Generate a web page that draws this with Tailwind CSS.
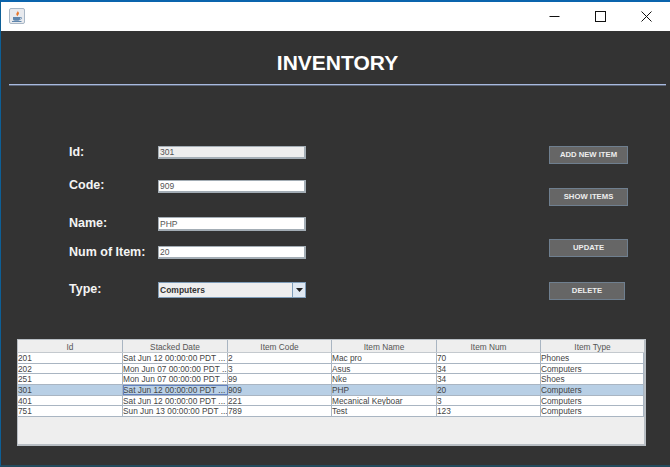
<!DOCTYPE html>
<html>
<head>
<meta charset="utf-8">
<script src="https://cdn.jsdelivr.net/npm/@tailwindcss/browser@4"></script>
</head>
<body class="w-[670px] h-[467px] overflow-hidden bg-[#333333] font-['Liberation_Sans',Arial,sans-serif]">
<div class="flex flex-col w-[670px] h-[467px] border-t-2 border-t-[#0a64ad] border-l border-l-[#0d5f96] border-b-2 border-b-[#234a5c]">
  <!-- title bar -->
  <header class="flex items-center justify-between h-[29px] bg-white shrink-0">
    <div class="ml-[8px] mt-[-1px] w-[16px] h-[16px] rounded-[2px] border border-[#a9b7c6] bg-[#e8eaee] flex items-center justify-center">
      <svg width="12" height="13" viewBox="0 0 12 13">
        <path d="M6.500 0.500c1 1.500-2 2.500-1 4.500c.3.600.8 1 1.200 1.300c-.4-1.200 1.800-2 1.200-3.600c-.3-.8-1-1.300-1.400-2.200z" fill="#e8762b"/>
        <path d="M2 7h7v2c0 1-.8 1.700-1.800 1.700H3.800C2.800 10.700 2 10 2 9z" fill="#5f86ad"/>
        <path d="M9 7.500h1.200c.8 0 .8 1.800-1.200 1.800" fill="none" stroke="#5f86ad" stroke-width=".8"/>
        <path d="M1 11.500h9.500" stroke="#5f86ad" stroke-width="1"/>
      </svg>
    </div>
    <div class="flex items-center h-full">
      <div class="w-[46px] flex justify-center"><svg width="11" height="11" viewBox="0 0 11 11"><path d="M0.500 5.500h10" stroke="#111" stroke-width="1"/></svg></div>
      <div class="w-[46px] flex justify-center"><svg width="11" height="11" viewBox="0 0 11 11"><rect x="0.500" y="0.500" width="10" height="10" fill="none" stroke="#111" stroke-width="1"/></svg></div>
      <div class="w-[46px] mr-[1px] flex justify-center"><svg width="11" height="11" viewBox="0 0 11 11"><path d="M0.500 0.500l10 10M10.500 0.500l-10 10" stroke="#111" stroke-width="1"/></svg></div>
    </div>
  </header>

  <main class="flex flex-col grow">
    <h1 class="mt-[19px] h-[25px] leading-[25px] text-center text-[21px] font-bold text-white pl-[4px]">INVENTORY</h1>
    <div class="mt-[9px] ml-[8px] w-[657px] h-[2px] bg-[#a8b9de] border-b border-[#5d6678]"></div>

    <section class="flex mt-[60px] h-[155px]">
      <div class="ml-[68px] w-[237px] flex flex-col text-[#f4f4f4] font-bold text-[12.500px]">
        <div class="flex items-center h-[13px]"><label class="w-[89px] mt-[-1px]">Id:</label><div class="w-[148px] h-[13px] border border-[#a3adb5] border-r-2 border-b-2 bg-[#eeeeee] text-[#555] font-normal text-[8.500px] leading-[11px] pl-[1px]">301</div></div>
        <div class="flex items-center h-[13px] mt-[21px]"><label class="w-[89px] mt-[-2px]">Code:</label><div class="w-[148px] h-[13px] border border-[#a3adb5] border-r-2 border-b-2 bg-white text-[#555] font-normal text-[8.500px] leading-[11px] pl-[1px]">909</div></div>
        <div class="flex items-center h-[14px] mt-[24px]"><label class="w-[89px] mt-[-2px]">Name:</label><div class="w-[148px] h-[14px] border border-[#a3adb5] border-r-2 border-b-2 bg-white text-[#555] font-normal text-[8.500px] leading-[12px] pl-[1px]">PHP</div></div>
        <div class="flex items-center h-[13px] mt-[15px]"><label class="w-[89px] mt-[-1px]">Num of Item:</label><div class="w-[148px] h-[13px] border border-[#a3adb5] border-r-2 border-b-2 bg-white text-[#555] font-normal text-[8.500px] leading-[11px] pl-[1px]">20</div></div>
        <div class="flex items-center h-[16px] mt-[23px]"><label class="w-[89px] mt-[-1px]">Type:</label>
          <div class="flex w-[148px] h-[16px] border border-[#7f9db9] bg-[#eeeeee] text-[#333] font-bold text-[8.500px] leading-[14px] pl-[1px]">
            <span class="grow">Computers</span>
            <span class="w-[13px] h-full border-l border-[#7f9db9] bg-[#dfe8f2] flex items-center justify-center"><svg width="7" height="4" viewBox="0 0 7 4"><path d="M0 0h7L3.500 4z" fill="#222"/></svg></span>
          </div>
        </div>
      </div>
      <div class="ml-[243px] flex flex-col w-[79px] font-bold text-[7.700px] text-[#eeeeee] text-center">
        <button class="h-[18px] leading-[16px] border border-[#6f7f8f] bg-[#666666]">ADD NEW ITEM</button>
        <button class="h-[18px] mt-[24px] leading-[16px] border border-[#6f7f8f] bg-[#666666]">SHOW ITEMS</button>
        <button class="h-[18px] mt-[33px] leading-[16px] border border-[#6f7f8f] bg-[#666666]">UPDATE</button>
        <button class="h-[18px] mt-[25px] w-[76px] leading-[16px] border border-[#6f7f8f] bg-[#666666]">DELETE</button>
      </div>
    </section>

    <section class="mt-[38px] ml-[16px] w-[629px] h-[107px] bg-[#eeeeee] border border-[#b8bec4] border-b-2 border-r-2 text-[8.300px] text-[#444] leading-[10px] whitespace-nowrap">
      <div class="grid grid-cols-[105px_105px_104px_105px_104px_103px] grid-rows-[12px] h-[13px] bg-[#eeeeee] border-b border-[#c4c9ce] text-center text-[#555]">
        <div class="leading-[14px] border-r border-[#a9b5c2]">Id</div>
        <div class="leading-[14px] border-r border-[#a9b5c2]">Stacked Date</div>
        <div class="leading-[14px] border-r border-[#a9b5c2]">Item Code</div>
        <div class="leading-[14px] border-r border-[#a9b5c2]">Item Name</div>
        <div class="leading-[14px] border-r border-[#a9b5c2]">Item Num</div>
        <div class="leading-[14px]">Item Type</div>
      </div>
      <div class="grid grid-cols-[105px_105px_104px_105px_104px_103px] h-[11px] bg-white border-b border-[#a9b5c2] [&>div]:border-r [&>div]:border-[#a9b5c2] [&>div]:overflow-hidden">
        <div>201</div><div>Sat Jun 12 00:00:00 PDT ...</div><div>2</div><div>Mac pro</div><div>70</div><div>Phones</div>
      </div>
      <div class="grid grid-cols-[105px_105px_104px_105px_104px_103px] h-[10px] bg-white border-b border-[#a9b5c2] [&>div]:border-r [&>div]:border-[#a9b5c2] [&>div]:overflow-hidden">
        <div>202</div><div>Mon Jun 07 00:00:00 PDT ...</div><div>3</div><div>Asus</div><div>34</div><div>Computers</div>
      </div>
      <div class="grid grid-cols-[105px_105px_104px_105px_104px_103px] h-[11px] bg-white border-b border-[#a9b5c2] [&>div]:border-r [&>div]:border-[#a9b5c2] [&>div]:overflow-hidden">
        <div>251</div><div>Mon Jun 07 00:00:00 PDT ...</div><div>99</div><div>Nke</div><div>34</div><div>Shoes</div>
      </div>
      <div class="grid grid-cols-[105px_105px_104px_105px_104px_103px] h-[11px] bg-[#b8cfe5] border-b border-[#a9b5c2] [&>div]:border-r [&>div]:border-[#a9b5c2] [&>div]:overflow-hidden">
        <div>301</div><div class="outline outline-[#6382bf] -outline-offset-1">Sat Jun 12 00:00:00 PDT ...</div><div>909</div><div>PHP</div><div>20</div><div>Computers</div>
      </div>
      <div class="grid grid-cols-[105px_105px_104px_105px_104px_103px] h-[10px] bg-white border-b border-[#a9b5c2] [&>div]:border-r [&>div]:border-[#a9b5c2] [&>div]:overflow-hidden">
        <div>401</div><div>Sat Jun 12 00:00:00 PDT ...</div><div>221</div><div>Mecanical Keyboar</div><div>3</div><div>Computers</div>
      </div>
      <div class="grid grid-cols-[105px_105px_104px_105px_104px_103px] h-[11px] bg-white border-b border-[#a9b5c2] [&>div]:border-r [&>div]:border-[#a9b5c2] [&>div]:overflow-hidden">
        <div>751</div><div>Sun Jun 13 00:00:00 PDT ...</div><div>789</div><div>Test</div><div>123</div><div>Computers</div>
      </div>
    </section>
  </main>
</div>
</body>
</html>
